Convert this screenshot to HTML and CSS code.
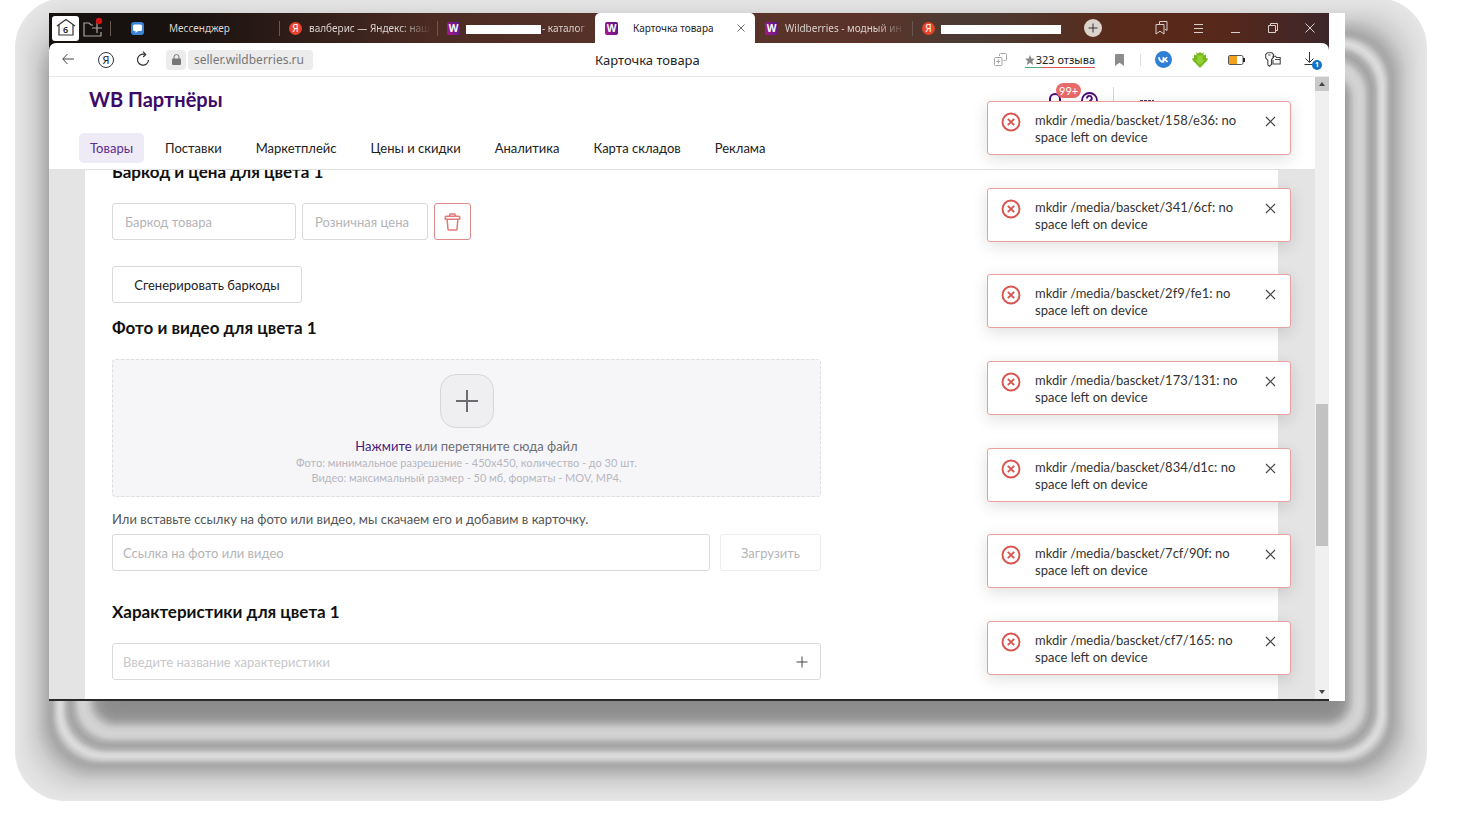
FILE: index.html
```
<!DOCTYPE html>
<html lang="ru">
<head>
<meta charset="utf-8">
<title>Карточка товара</title>
<link rel="stylesheet" href="styles.css">
</head>
<body>
<div class="frame">
  <div class="halo" id="halo" aria-hidden="true"></div>
  <div class="window">
    <header class="tabbar">
      <button class="home" aria-label="Домой">
        <svg width="20" height="20" viewBox="0 0 20 20" fill="none" stroke="#333" stroke-width="1.2"><path d="M1 8 10 1.5 19 8M3 7v10h14V7"/></svg>
        <span class="home-count">6</span>
      </button>
      <button class="folder" aria-label="Группа вкладок">
        <svg width="22" height="22" viewBox="0 0 22 22" fill="none" stroke="#a9a5a3" stroke-width="1.2"><path d="M10 8H8L6 6H1v13h17v-4M14 6v10M9 11h10"/><circle cx="16" cy="4" r="3.200" fill="#d31212" stroke="none"/></svg>
      </button>
      <div class="tab tab-first">
        <svg class="fav" viewBox="0 0 13 13"><rect width="13" height="13" rx="3" fill="#3d84d8"/><path d="M3.500 2.500h6q1.500 0 1.500 1.500v3.500q0 1.500-1.500 1.500H7L4.500 11V9h-1Q2 9 2 7.500V4q0-1.500 1.500-1.500z" fill="#fff"/></svg>
        <span class="tab-text wide">Мессенджер</span>
      </div>
      <div class="tab">
        <span class="fav ya">Я</span><span class="tab-text fade">валберис — Яндекс: наш</span>
      </div>
      <div class="tab">
        <span class="fav wb">W</span><span class="blot"></span><span class="tab-text fade short">- каталог</span>
      </div>
      <div class="tab active">
        <span class="fav wb">W</span><span class="tab-text">Карточка товара</span>
        <button class="tab-close" aria-label="Закрыть вкладку"><svg width="8" height="8" viewBox="0 0 8 8" stroke="#666" fill="none"><path d="M.5.5l7 7M7.500.5l-7 7"/></svg></button>
      </div>
      <div class="tab nosep">
        <span class="fav wb">W</span><span class="tab-text fade">Wildberries - модный ин</span>
      </div>
      <div class="tab">
        <span class="fav ya">Я</span><span class="blot long"></span>
      </div>
      <button class="newtab" aria-label="Новая вкладка"><svg width="18" height="18" viewBox="0 0 18 18"><circle cx="9" cy="9" r="9" fill="#dcd3cf"/><path d="M9 4.500v9M4.500 9h9" stroke="#333" fill="none"/></svg></button>
      <div class="controls">
        <button aria-label="Закладки"><svg width="13" height="14" viewBox="0 0 13 14" fill="none" stroke="#d8cfcc"><path d="M4.500 3.500v-3h7.500v9l-2-1.500M1 3.500h8V13L5 10.200 1 13z"/></svg></button>
        <button aria-label="Меню"><svg width="9" height="10" viewBox="0 0 9 10" stroke="#d8cfcc"><path d="M0 1.500h9M0 5.500h9M0 9.500h9"/></svg></button>
        <button aria-label="Свернуть"><svg width="9" height="10" viewBox="0 0 9 10" stroke="#d8cfcc"><path d="M0 9.500h9"/></svg></button>
        <button aria-label="Развернуть"><svg width="10" height="10" viewBox="0 0 10 10" fill="none" stroke="#d8cfcc"><path d="M2.500 2.500v-2h7v7h-2M.5 2.500h7v7h-7z"/></svg></button>
        <button aria-label="Закрыть"><svg width="10" height="10" viewBox="0 0 10 10" stroke="#d8cfcc"><path d="M.5.5l9 9M9.500.5l-9 9"/></svg></button>
      </div>
    </header>

    <div class="toolbar-back"><div class="toolbar">
      <div class="tools-left">
        <button aria-label="Назад"><svg width="12" height="12" viewBox="0 0 12 12" fill="none" stroke="#444"><path d="M12 6H.8M5.500 1 .8 6l4.700 5"/></svg></button>
        <button class="ya-ring" aria-label="Яндекс">Я</button>
        <button aria-label="Обновить"><svg width="14" height="16" viewBox="0 0 14 16" fill="none" stroke="#333" stroke-width="1.200"><path d="M12.500 9a5.500 5.500 0 1 1-4-5.600M7 .6l2.700 2.800L7.200 6"/></svg></button>
      </div>
      <span class="lock"><svg width="9" height="11" viewBox="0 0 9 11"><rect y="4.500" width="9" height="6.500" rx="1" fill="#777"/><path d="M2 5V3a2.500 2.500 0 0 1 5 0v2" fill="none" stroke="#777"/></svg></span>
      <a class="url" href="#">seller.wildberries.ru</a>
      <span class="page-title">Карточка товара</span>
      <div class="tools-right">
        <svg width="13" height="13" viewBox="0 0 13 13" fill="none" stroke="#a5a5a5"><path d="M5.500 3V1.500q0-1 1-1h5q1 0 1 1v5q0 1-1 1H9.500"/><rect x=".5" y="4.500" width="7.500" height="8" rx="1"/><path d="M2.300 8.500h4M4.300 6.500v4"/></svg>
        <a class="reviews" href="#"><svg width="10" height="10" viewBox="0 0 10 10"><path d="M5 0l1.400 3.500L10 3.800 7.300 6.100 8.100 10 5 7.800 1.900 10l.8-3.900L0 3.800l3.600-.3z" fill="#888"/></svg>323 отзыва</a>
        <svg class="mark" width="9" height="12" viewBox="0 0 9 12"><path d="M1 0h7q1 0 1 1v11L4.500 8.800 0 12V1q0-1 1-1z" fill="#8c8c8c"/></svg>
        <span class="bar"></span>
        <svg width="17" height="17" viewBox="0 0 17 17"><circle cx="8.500" cy="8.500" r="8.500" fill="#2f7fd6"/><path d="M3.800 6.200c.6 2.800 2 4.700 4.600 4.700V6M8.400 8.600c1.700 0 2.800-1 3.700-2.500M8.600 8.300c1.800.2 2.900 1.100 3.900 2.700" fill="none" stroke="#fff" stroke-width="1.700"/></svg>
        <svg width="16" height="16" viewBox="0 0 16 16"><path d="M4.500 0 6 1.500 8 0l2 1.500L11.500 0v3.500L14 2.500V6l2 .5-.8 2L8 16 .8 8.500 0 6.500 2 6V2.500l2.500 1z" fill="#78b81f"/><path d="M5.500 3.500h5V8h2.200L8 13 3.300 8h2.200z" fill="#94d130"/></svg>
        <svg width="17" height="10" viewBox="0 0 17 10"><rect x=".5" y=".5" width="14.500" height="9" rx="1.500" fill="#fff" stroke="#555"/><rect x="1" y="1" width="8" height="8" fill="#f2a01f"/><path d="M16 3v4" stroke="#222" stroke-width="2"/></svg>
        <svg width="16" height="15" viewBox="0 0 16 15" fill="none" stroke="#444" stroke-width="1.100"><path d="M8 6V4.200h2.500l1 1.300h3.700V12H8V8M10 7.500h5M2 7.500.7 5.800V2.500L2.500.7h4.300L8.500 2.500v3L6.500 7.500v5L4.500 14.200 2.800 12.800V8zM3.300 3h2.200"/></svg>
        <span class="download"><svg width="18" height="18" viewBox="0 0 18 18"><path d="M5.500 0v10M1.500 6.500l4 4 4-4M.5 12.500h8" fill="none" stroke="#333"/><circle cx="13" cy="13" r="5" fill="#1273c8"/></svg><b>1</b></span>
      </div>
    </div></div>

    <div class="viewport">
      <div class="page">
        <header class="site-head">
          <div class="head-row">
            <a class="brand" href="#">WB Партнёры</a>
            <div class="head-tools">
              <span class="bell"><svg width="14" height="18" viewBox="0 0 14 18" fill="none" stroke="#4a0a77" stroke-width="2"><path d="M1 14h12M2 14V7a5 5 0 0 1 10 0v7"/></svg><span class="badge">99+</span></span>
              <svg width="17" height="17" viewBox="0 0 17 17" fill="none" stroke="#4a0a77" stroke-width="1.800"><circle cx="8.500" cy="8.500" r="7.500"/><path d="M6 6.500a2.400 2.400 0 1 1 3.400 2L8.500 9.500v1"/></svg>
              <span class="head-sep"></span>
              <span class="trace"></span><span class="trace pale"></span>
            </div>
          </div>
          <nav class="nav">
            <a class="current" href="#">Товары</a><a href="#">Поставки</a><a href="#">Маркетплейс</a><a href="#">Цены и скидки</a><a href="#">Аналитика</a><a href="#">Карта складов</a><a href="#">Реклама</a>
          </nav>
        </header>
        <main class="content">
          <div class="form">
            <h2 class="cut">Баркод и цена для цвета 1</h2>
            <div class="codes">
              <input class="code" type="text" placeholder="Баркод товара" aria-label="Баркод товара">
              <input class="price" type="text" placeholder="Розничная цена" aria-label="Розничная цена">
              <button class="delete" aria-label="Удалить"><svg width="17" height="18" viewBox="0 0 18 20" fill="none" stroke="#df7b7b" stroke-width="1.700" stroke-linejoin="round"><path d="M5.500 3.500 6.500 1h5l1 2.500M2 3.500h14q1 0 1 1V7H1V4.500q0-1 1-1zM3 7l1 11q.1 1 1 1h8q.9 0 1-1l1-11"/></svg></button>
            </div>
            <button class="generate">Сгенерировать баркоды</button>
            <h2>Фото и видео для цвета 1</h2>
            <div class="drop">
              <button class="add" aria-label="Добавить файл"><svg width="24" height="24" viewBox="0 0 24 24" stroke="#6c6c72" stroke-width="2"><path d="M12 1v22M1 12h22"/></svg></button>
              <p class="drop-main"><a href="#">Нажмите</a> или перетяните сюда файл</p>
              <p class="hint">Фото: минимальное разрешение - 450x450, количество - до 30 шт.</p>
              <p class="hint">Видео: максимальный размер - 50 мб, форматы - MOV, MP4.</p>
            </div>
            <label class="link-label" for="link">Или вставьте ссылку на фото или видео, мы скачаем его и добавим в карточку.</label>
            <div class="link-row">
              <input id="link" type="text" placeholder="Ссылка на фото или видео">
              <button class="upload" disabled>Загрузить</button>
            </div>
            <h2>Характеристики для цвета 1</h2>
            <div class="trait">
              <input type="text" placeholder="Введите название характеристики" aria-label="Название характеристики">
              <button aria-label="Добавить характеристику"><svg width="12" height="12" viewBox="0 0 12 12" stroke="#444"><path d="M6 .5v11M.5 6h11"/></svg></button>
            </div>
          </div>
        </main>
        <ul class="toasts" id="toasts"></ul>
      </div>
      <div class="scrollbar" aria-hidden="true">
        <span class="arrow up"></span><span class="track"><span class="thumb"></span></span><span class="arrow down"></span>
      </div>
    </div>
  </div>
</div>
<script src="script.js"></script>
</body>
</html>
```
FILE: styles.css
```
* { box-sizing: border-box; }
body { margin: 0; background: #fff; font-family: Lato, "Liberation Sans", sans-serif; font-size: 13px; color: #222; overflow: hidden; }
button { border: 0; padding: 0; background: none; font: inherit; color: inherit; display: flex; align-items: center; justify-content: center; }
input { font: inherit; border: 1px solid #dadadd; border-radius: 3px; height: 37px; background: #fff; min-width: 0; outline: 0; }
input::placeholder { color: #b4b4b8; opacity: 1; }
a { color: inherit; text-decoration: none; }
h2, p, ul { margin: 0; padding: 0; }
svg { display: block; flex: none; }

.frame { position: relative; margin: 0 33px 24px 15px; padding: 13px 82px 100px 34px; min-height: calc(100vh - 24px); display: flex; }
.halo { position: absolute; inset: -2px 0 0; }
.halo i { position: absolute; }
.window { position: relative; flex: 1; min-width: 0; display: flex; flex-direction: column; background: #fff; padding-right: 16px; }

.tabbar { display: flex; align-items: center; height: 30px; padding-left: 3px; font-family: "Noto Sans", sans-serif; font-size: 10px; color: #d9d2cf; background: linear-gradient(90deg, #17110f 0, #17110f 10%, #4b2b23 30%, #573229 44%, #5a3229 64%, #493b34 72%, #5a2a1a 84%, #56281b 92%, #3c262b); }
.home { position: relative; width: 27px; height: 25px; border-radius: 3px; background: #fff; }
.home-count { position: absolute; inset: 7px 0 0; font-size: 9px; line-height: 13px; font-weight: 600; color: #222; }
.folder { width: 31px; padding-right: 2px; }
.tab { position: relative; display: flex; align-items: center; width: 158px; height: 30px; padding: 0 6px 0 10px; gap: 7px; white-space: nowrap; }
.tab::before { content: ""; position: absolute; left: 0; top: 8px; height: 15px; border-left: 1px solid #6b5751; }
.tab-first { width: 169px; padding-left: 21px; }
.tab.nosep { width: 157px; }
.tab.nosep::before, .tab.active::before { display: none; }
.fav { flex: none; width: 13px; height: 13px; }
.ya { border-radius: 50%; background: #e5432b; color: #fff; line-height: 13px; text-align: center; }
.wb { border-radius: 2px; background: linear-gradient(70deg, #b0158c, #4a1a8c); color: #fff; font-weight: 700; line-height: 12px; text-align: center; }
.tab-text { overflow: hidden; }
.wide { padding-left: 18px; }
.fade { width: 122px; -webkit-mask-image: linear-gradient(90deg, #000 75%, transparent); mask-image: linear-gradient(90deg, #000 75%, transparent); }
.short { width: 48px; }
.blot { flex: none; width: 75px; height: 9px; margin: 3px -6px 0 -1px; background: #fff; }
.blot.long { width: 120px; }
.tab.active { width: 160px; background: #fff; color: #222; border-radius: 5px 5px 0 0; }
.active .tab-text { padding-left: 8px; flex: 1; }
.tab-close { width: 17px; }
.newtab { margin-left: 14px; }
.controls { margin-left: auto; display: flex; padding-right: 1px; }
.controls button { width: 37px; height: 30px; }

.toolbar-back { background: linear-gradient(90deg, #17110f 50%, #3c262b 50%); }
.toolbar { display: flex; align-items: center; height: 34px; border-bottom: 1px solid #e9e9e9; border-radius: 7px 7px 0 0; background: #fff; font-family: "Noto Sans", sans-serif; font-size: 13px; }
.tools-left { display: flex; }
.tools-left button { width: 37px; height: 33px; }
.lock { display: flex; align-items: center; justify-content: center; width: 20px; height: 20px; margin-left: 5px; border-radius: 4px; background: #ececec; }
.tools-left .ya-ring { width: 16px; height: 16px; margin: 9px 10px 9px 12px; border: 1px solid #333; border-radius: 50%; font-size: 11px; }
.url { margin-left: 2px; padding: 0 9px 0 6px; height: 20px; line-height: 20px; border-radius: 4px; background: #ececec; color: #777; font-size: 12px; }
.page-title { flex: 1; padding-left: 282px; white-space: nowrap; }
.tools-right { display: flex; align-items: center; gap: 20px; padding-right: 7px; font-size: 11px; }
.reviews { display: flex; align-items: center; gap: 1px; white-space: nowrap; height: 17px; margin-left: -2px; background: linear-gradient(90deg, #4caf7a 24%, #d9544f 24%) bottom / 100% 1px no-repeat; }
.bar { height: 12px; border-left: 1px solid #ddd; margin: 0 -6px 0 -4px; }
.download { position: relative; padding-top: 2px; margin-left: 3px; }
.download b { position: absolute; left: 8px; top: 10px; width: 10px; font-size: 7px; line-height: 10px; color: #fff; text-align: center; }

.viewport { flex: 1; display: flex; min-height: 0; border-bottom: 2px solid #2a2927; }
.page { position: relative; flex: 1; min-width: 0; display: flex; flex-direction: column; background: #e4e4e4; }
.site-head { background: #fff; border-bottom: 1px solid #e2e2e4; height: 93px; padding: 8px 30px 0 40px; }
.head-row { display: flex; justify-content: space-between; height: 48px; }
.brand { font-size: 20px; line-height: 28px; font-weight: 700; color: #3c0a66; }
.head-tools { display: flex; gap: 19px; padding: 7px 12px 0 0; }
.bell { position: relative; }
.badge { position: absolute; left: 8px; top: -9px; padding: 0 3px; border-radius: 8px; background: #e96a6a; color: #fff; font-size: 11px; line-height: 15px; }
.head-sep { border-left: 1px solid #d5d5d8; height: 20px; margin: -5px 7px 0 -4px; }
.trace { width: 14px; height: 2px; margin-top: 8px; background: repeating-linear-gradient(90deg, #4b3f60 0 3px, #fff 3px 4px); }
.trace.pale { width: 96px; background: #fff; margin-left: 4px; }
.nav { display: flex; margin-left: -10px; white-space: nowrap; }
.nav a { padding: 0 11px; margin-right: 12px; line-height: 30px; border-radius: 5px; }
.nav a.current { margin-right: 10px; background: #eeeaf6; color: #5a2d91; }

.content { flex: 1; margin: 0 37px 0 36px; padding: 0 27px; background: #fff; overflow: hidden; }
.form { max-width: 709px; }
h2 { font-size: 17px; line-height: 22px; font-weight: 700; color: #111; }
.cut { margin: -9px 0 20px; }
.codes { display: flex; gap: 6px; margin-bottom: 26px; }
.code { width: 184px; padding: 0 12px; }
.price { width: 126px; padding: 0 12px; }
.delete { width: 37px; height: 37px; border: 1px solid #df8a8a; border-radius: 3px; }
.generate { width: 190px; height: 37px; margin-bottom: 14px; border: 1px solid #dadadd; border-radius: 3px; }
.drop { display: flex; flex-direction: column; align-items: center; margin: 20px 0 13px; padding: 14px 0 11px; border: 1px dashed #dcdce2; border-radius: 4px; background: #f6f6f9; }
.add { width: 54px; height: 54px; margin-bottom: 9px; border: 1px solid #d7d7db; border-radius: 16px; background: #efeff1; }
.drop-main { line-height: 18px; color: #6e6e74; }
.drop-main a { color: #4a1a78; }
.hint { font-size: 11px; line-height: 15px; color: #b7b7be; }
.link-label { display: block; line-height: 18px; margin-bottom: 6px; color: #555; }
.link-row { display: flex; gap: 10px; margin-bottom: 30px; }
.link-row input { flex: 1; padding: 0 10px; }
.upload { width: 101px; border: 1px solid #ececee; border-radius: 3px; color: #b4b4b8; }
.trait { display: flex; margin-top: 20px; border: 1px solid #dadadd; border-radius: 3px; }
.trait input { flex: 1; height: 35px; padding: 0 10px; border: 0; }
.trait input::placeholder { color: #c8c8cb; }
.trait button { width: 37px; }

.toasts { position: absolute; top: 24px; right: 24px; bottom: 24px; width: 304px; display: flex; flex-direction: column; justify-content: space-between; list-style: none; }
.toasts li { display: flex; align-items: flex-start; padding: 10px 14px 8px 13px; border: 1px solid #eaa0a0; border-radius: 3px; background: #fff; box-shadow: 0 4px 16px rgba(0, 0, 0, .13); }
.toasts p { flex: 1; padding: 0 24px 0 14px; line-height: 17px; color: #333; }
.toasts li > button { margin-top: 4px; }

.scrollbar { width: 14px; display: flex; flex-direction: column; background: #f0f0f0; }
.arrow { height: 14px; display: flex; align-items: center; justify-content: center; }
.arrow::before { content: ""; border: 3px solid transparent; }
.up { background: #c9c9c9; }
.up::before { border-bottom: 4px solid #444; border-top: 0; }
.down::before { border-top: 4px solid #444; border-bottom: 0; }
.track { flex: 1; display: flex; flex-direction: column; padding: 313px 1px 0; }
.thumb { height: 142px; background: #c2c2c2; }
```
FILE: script.js
```
// Error notifications
const folders = ["158/e36", "341/6cf", "2f9/fe1", "173/131", "834/d1c", "7cf/90f", "cf7/165"];
document.getElementById("toasts").innerHTML = folders.map(f => `<li>
<svg width="20" height="20" viewBox="0 0 20 20" fill="none" stroke="#d9534f" stroke-width="1.900"><circle cx="10" cy="10" r="8.500"/><path d="M6.800 6.800l6.400 6.400M13.200 6.800l-6.400 6.400"/></svg>
<p>mkdir /media/bascket/${f}: no space left on device</p>
<button aria-label="Закрыть"><svg width="11" height="11" viewBox="0 0 11 11" stroke="#444" stroke-width="1.200"><path d="M1 1l9 9M10 1l-9 9"/></svg></button></li>`).join("");

// Contoured halo: [distance from the edge, grey level, corner radius]
const stops = [[0, 230, 50], [10, 221, 54], [20, 207, 54], [28, 184, 52], [34, 168, 48], [37, 173, 47], [41, 205, 46], [44, 221, 45], [47, 212, 43], [51, 178, 41], [55, 164, 38], [59, 180, 36], [63, 206, 34], [67, 212, 31], [72, 205, 28], [77, 176, 24], [82, 152, 20], [88, 143, 16], [100, 138, 10]];
const halo = document.getElementById("halo");
for (let d = 0, s = 0; d <= 100; d++) {
  while (s < stops.length - 2 && d > stops[s + 1][0]) s++;
  const [a, b] = [stops[s], stops[s + 1]];
  const t = (d - a[0]) / (b[0] - a[0]);
  const g = Math.round(a[1] + (b[1] - a[1]) * t);
  const ring = document.createElement("i");
  ring.style.cssText = `inset:${d}px;border-radius:${a[2] + (b[2] - a[2]) * t}px;background:rgb(${g},${g},${g})`;
  halo.append(ring);
}
```
